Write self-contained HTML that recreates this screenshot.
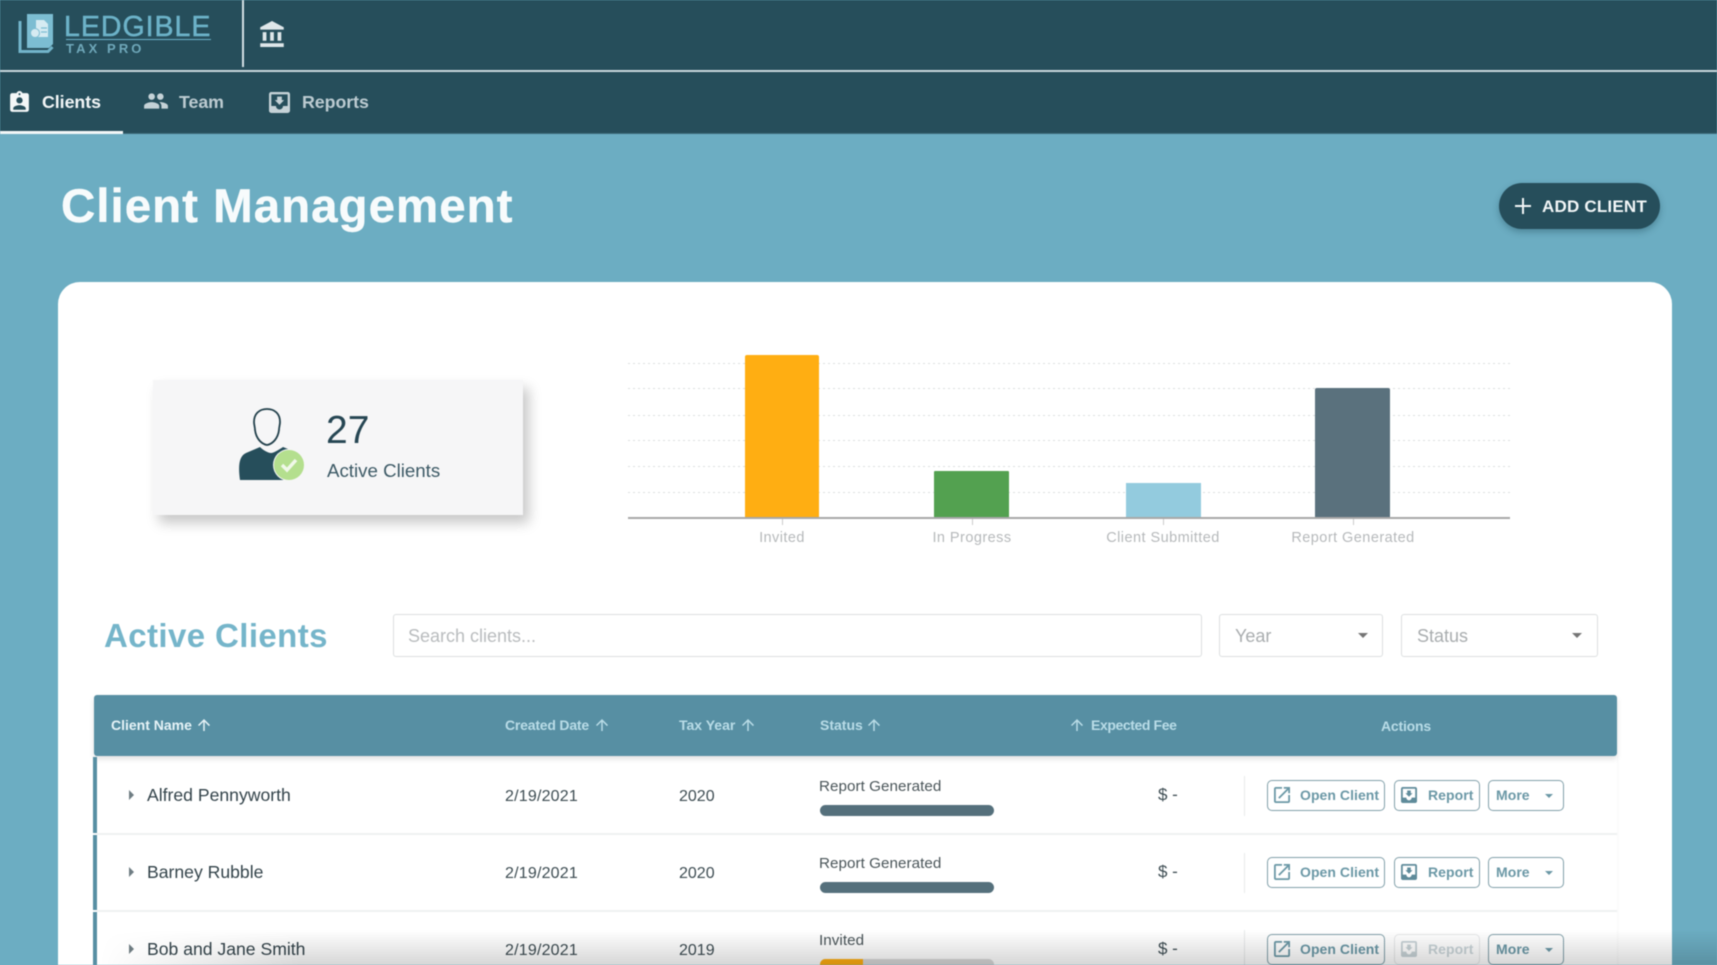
<!DOCTYPE html>
<html lang="en">
<head>
<meta charset="utf-8">
<title>Client Management</title>
<style>
html,body{margin:0;padding:0;width:1717px;height:965px;overflow:hidden;background:#6cadc2}
body{font-family:"Liberation Sans",sans-serif;position:relative}
#p{position:absolute;left:0;top:0;width:1717px;height:965px;overflow:hidden;background:#6cadc2;filter:blur(.5px)}
.a{position:absolute;white-space:nowrap}
.t{position:absolute;white-space:nowrap;line-height:1}
.th{font-size:14px;font-weight:bold;color:#b9dce7;top:718px}
.name{font-size:17.6px;color:#33434a;left:147px}
.cell{font-size:16px;color:#3d4c52;letter-spacing:.2px}
.st{font-size:15.2px;color:#4a5559;left:819px;letter-spacing:.05px}
.bt{position:absolute;box-sizing:border-box;height:31px;border:1.5px solid #82a0aa;border-radius:5px;background:#fff}
.bl{position:absolute;font-size:14px;font-weight:bold;color:#6b98a6;line-height:1;white-space:nowrap;letter-spacing:.05px}
.ic{position:absolute}
.grid{position:absolute;left:628px;width:882px;height:1px;background:repeating-linear-gradient(to right,#dcdedf 0,#dcdedf 2px,transparent 2px,transparent 5px)}
.inp{position:absolute;box-sizing:border-box;top:614px;height:43px;border:1.5px solid #dcdfe0;border-radius:3px;background:#fff}
.ph{font-size:18px;color:#a9adaf;top:627px}
.car{position:absolute;width:0;height:0;border-left:5.5px solid transparent;border-right:5.5px solid transparent;border-top:5.5px solid #757575}
.hr{position:absolute;left:97px;width:1520px;height:2px;background:#eff1f1}
.nv{position:absolute;white-space:nowrap;line-height:1;top:94px;font-size:17.8px;font-weight:bold;color:#bccbd1;letter-spacing:-.05px}
.cl{position:absolute;white-space:nowrap;line-height:1;width:200px;text-align:center;top:531px;font-size:14.5px;color:#b6b9bb;letter-spacing:.45px}
</style>
</head>
<body>
<svg width="0" height="0" style="position:absolute">
<symbol id="i-in" viewBox="3 3 18 18"><path d="M19 3H4.99c-1.11 0-1.98.89-1.98 2L3 19c0 1.1.88 2 1.99 2H19c1.1 0 2-.9 2-2V5c0-1.11-.9-2-2-2zm0 12h-4c0 1.66-1.35 3-3 3s-3-1.34-3-3H4.99V5H19v10zm-3-5h-2V7h-4v3H8l4 4 4-4z"/></symbol>
<symbol id="i-op" viewBox="3 3 18 18"><path d="M19 19H5V5h7V3H5c-1.11 0-2 .9-2 2v14c0 1.1.89 2 2 2h14c1.1 0 2-.9 2-2v-7h-2v7zM14 3v2h3.59l-9.83 9.83 1.41 1.41L19 6.41V10h2V3h-7z"/></symbol>
<symbol id="i-up" viewBox="4 4 16 16"><path d="M4 12l1.41 1.41L11 7.83V20h2V7.83l5.58 5.59L20 12l-8-8-8 8z"/></symbol>
</svg>
<div id="p">

<!-- header -->
<div class="a" style="left:0;top:0;width:1717px;height:134px;background:#264e5b"></div>
<div class="a" style="left:0;top:69.5px;width:1717px;height:2px;background:#c9d8dd"></div>
<div class="a" style="left:242px;top:0;width:2px;height:67px;background:#d5e0e4"></div>
<div class="a" style="left:0;top:131px;width:123px;height:3px;background:#f2f6f7"></div>
<div class="a" style="left:123px;top:133px;width:1594px;height:1px;background:#3d6a79"></div>

<!-- logo -->
<svg class="ic" style="left:17px;top:13px" width="38" height="42" viewBox="0 0 38 42">
<path d="M3 8v30.500h28l4.500-4.500" fill="none" stroke="#72b4ca" stroke-width="3"/>
<path d="M10 1h26v30l-4 4H10z" fill="#7cbdd2"/>
<path d="M19 7h8l4 4v13H19z" fill="#d6ebf2"/>
<circle cx="18" cy="20" r="4.500" fill="#d6ebf2" stroke="#7cbdd2"/>
<path d="M24 15h6M24 19h6" stroke="#7cbdd2" stroke-width="1.2"/>
</svg>
<div class="t" style="left:64px;top:13px;font-size:28.5px;color:#6cb2c8;letter-spacing:1px;-webkit-text-stroke:.5px #6cb2c8">LEDGIBLE</div>
<div class="a" style="left:66px;top:39px;width:145px;height:1px;background:#6cb2c8"></div>
<div class="t" style="left:66px;top:42px;font-size:13px;font-weight:bold;color:#6fa8ba;letter-spacing:3.1px">TAX PRO</div>
<svg class="ic" style="left:259px;top:21px" width="26" height="26" viewBox="1 1 21 21"><path fill="#dfe7ea" d="M4 10v7h3v-7H4zm6 0v7h3v-7h-3zM2 22h19v-3H2v3zm14-12v7h3v-7h-3zm-4.500-9L2 6v2h19V6l-9.500-5z"/></svg>

<!-- nav -->
<svg class="ic" style="left:7px;top:90px" width="25" height="25" viewBox="0 0 24 24"><path fill="#f4f7f8" d="M19 3h-4.180C14.400 1.840 13.300 1 12 1c-1.300 0-2.400.840-2.820 2H5c-1.100 0-2 .900-2 2v14c0 1.100.900 2 2 2h14c1.100 0 2-.900 2-2V5c0-1.100-.900-2-2-2zm-7 0c.550 0 1 .450 1 1s-.450 1-1 1-1-.450-1-1 .450-1 1-1zm0 4c1.660 0 3 1.340 3 3s-1.340 3-3 3-3-1.340-3-3 1.340-3 3-3zm6 12H6v-1.400c0-2 4-3.100 6-3.100s6 1.100 6 3.100V19z"/></svg>
<div class="nv" style="left:42px;color:#f2f6f7">Clients</div>
<svg class="ic" style="left:143px;top:88px" width="26" height="26" viewBox="0 0 24 24"><path fill="#c5d2d7" d="M16 11c1.660 0 2.990-1.340 2.990-3S17.660 5 16 5c-1.660 0-3 1.340-3 3s1.340 3 3 3zm-8 0c1.660 0 2.990-1.340 2.990-3S9.660 5 8 5C6.340 5 5 6.340 5 8s1.340 3 3 3zm0 2c-2.330 0-7 1.170-7 3.500V19h14v-2.500c0-2.330-4.670-3.500-7-3.500zm8 0c-.290 0-.620.020-.970.050 1.160.840 1.970 1.970 1.970 3.450V19h6v-2.500c0-2.330-4.670-3.500-7-3.500z"/></svg>
<div class="nv" style="left:179px">Team</div>
<svg class="ic" style="left:269px;top:92px;fill:#c5d2d7" width="21" height="21"><use href="#i-in"/></svg>
<div class="nv" style="left:302px">Reports</div>

<!-- title -->
<div class="t" style="left:61px;top:183px;font-size:47.500px;font-weight:bold;color:#f7fbfc;letter-spacing:1px;-webkit-text-stroke:.4px #f7fbfc">Client Management</div>
<div class="a" style="left:1499px;top:183px;width:161px;height:46px;border-radius:23px;background:#264e5b;box-shadow:0 3px 7px rgba(20,60,75,.35)"></div>
<svg class="ic" style="left:1514px;top:197px" width="18" height="18"><path d="M9 1v16M1 9h16" stroke="#f2f6f7" stroke-width="2"/></svg>
<div class="t" style="left:1542px;top:198px;font-size:17px;font-weight:bold;color:#f2f6f7;letter-spacing:.2px">ADD CLIENT</div>

<!-- main card -->
<div class="a" style="left:58px;top:282px;width:1614px;height:720px;border-radius:22px;background:#fff"></div>

<!-- stat card -->
<div class="a" style="left:153px;top:380px;width:370px;height:135px;background:#f6f6f7;box-shadow:6px 8px 12px rgba(0,0,0,.22)"></div>
<svg class="ic" style="left:236px;top:404px" width="70" height="80" viewBox="0 0 70 80">
<path d="M4 76c-2-14-1-24 6-27l14-6c3 3 8 6 11 6s9-4 12-6l10 4v29z" fill="#264e5b"/>
<path d="M31 5c-8 0-13 5-13 13 0 3 1 5 1 8 1 8 6 14 12 15 6-1 11-7 12-15 0-3 1-5 1-8 0-8-5-13-13-13z" fill="#f6f6f7" stroke="#23414c" stroke-width="1.800"/>
<circle cx="53" cy="61" r="16" fill="#f6f6f7"/>
<circle cx="53" cy="61" r="15" fill="#b4df8e"/>
<path d="M46 61l5 5 9-10" fill="none" stroke="#f0f8e9" stroke-width="3.500"/>
</svg>
<div class="t" style="left:326px;top:411px;font-size:39px;color:#264653">27</div>
<div class="t" style="left:327px;top:462px;font-size:18.700px;color:#3d5a66">Active Clients</div>

<!-- chart -->
<div class="grid" style="top:363px"></div>
<div class="grid" style="top:388px"></div>
<div class="grid" style="top:415px"></div>
<div class="grid" style="top:440px"></div>
<div class="grid" style="top:466px"></div>
<div class="grid" style="top:492px"></div>
<div class="a" style="left:745px;top:355px;width:74px;height:163px;background:#ffae12;border-radius:2px 2px 0 0"></div>
<div class="a" style="left:934px;top:471px;width:75px;height:47px;background:#53a150;border-radius:1px 1px 0 0"></div>
<div class="a" style="left:1126px;top:483px;width:75px;height:35px;background:#93cbde"></div>
<div class="a" style="left:1315px;top:388px;width:75px;height:130px;background:#5a717d;border-radius:2px 2px 0 0"></div>
<div class="a" style="left:628px;top:517px;width:882px;height:2px;background:#a8a8a8"></div>
<div class="a" style="left:782px;top:519px;width:1px;height:6px;background:#ccc"></div>
<div class="a" style="left:972px;top:519px;width:1px;height:6px;background:#ccc"></div>
<div class="a" style="left:1163px;top:519px;width:1px;height:6px;background:#ccc"></div>
<div class="a" style="left:1353px;top:519px;width:1px;height:6px;background:#ccc"></div>
<div class="cl" style="left:682px">Invited</div>
<div class="cl" style="left:872px">In Progress</div>
<div class="cl" style="left:1063px">Client Submitted</div>
<div class="cl" style="left:1253px">Report Generated</div>

<!-- filters -->
<div class="t" style="left:104px;top:619px;font-size:33px;font-weight:bold;color:#75b5ca;letter-spacing:.4px">Active Clients</div>
<div class="inp" style="left:393px;width:809px"></div>
<div class="t ph" style="left:408px;color:#b9bcbe">Search clients...</div>
<div class="inp" style="left:1219px;width:164px"></div>
<div class="t ph" style="left:1235px">Year</div>
<div class="car" style="left:1358px;top:633px"></div>
<div class="inp" style="left:1401px;width:197px"></div>
<div class="t ph" style="left:1417px">Status</div>
<div class="car" style="left:1572px;top:633px"></div>

<!-- table -->
<div class="a" style="left:97px;top:756px;width:1520px;height:220px;background:#fff;box-shadow:0 0 3px rgba(0,0,0,.06)"></div>
<div class="a" style="left:94px;top:695px;width:1523px;height:61px;background:#578fa3;border-radius:3px;box-shadow:0 3px 6px rgba(0,0,0,.12)"></div>
<div class="t th" style="left:111px;color:#e6f3f7">Client Name</div>
<svg class="ic" style="left:198px;top:719px;fill:#e6f3f7" width="12" height="12"><use href="#i-up"/></svg>
<div class="t th" style="left:505px;letter-spacing:-.2px">Created Date</div>
<svg class="ic" style="left:596px;top:719px;fill:#b9dce7" width="12" height="12"><use href="#i-up"/></svg>
<div class="t th" style="left:679px">Tax Year</div>
<svg class="ic" style="left:742px;top:719px;fill:#b9dce7" width="12" height="12"><use href="#i-up"/></svg>
<div class="t th" style="left:820px">Status</div>
<svg class="ic" style="left:868px;top:719px;fill:#b9dce7" width="12" height="12"><use href="#i-up"/></svg>
<svg class="ic" style="left:1071px;top:719px;fill:#b9dce7" width="12" height="12"><use href="#i-up"/></svg>
<div class="t th" style="left:1091px;letter-spacing:-.4px">Expected Fee</div>
<div class="t th" style="left:1381px;top:719px;letter-spacing:-.2px">Actions</div>

<div class="a" style="left:93px;top:757px;width:4px;height:76px;background:#578fa3"></div>
<div class="a" style="left:93px;top:835px;width:4px;height:75px;background:#578fa3"></div>
<div class="a" style="left:93px;top:912px;width:4px;height:60px;background:#578fa3"></div>
<div class="hr" style="top:833px"></div>
<div class="hr" style="top:910px"></div>

<!-- row 1 -->
<div class="a" style="left:129px;top:790px;width:0;height:0;border-top:5.500px solid transparent;border-bottom:5.500px solid transparent;border-left:5.500px solid #6f7d83"></div>
<div class="t name" style="top:786.500px">Alfred Pennyworth</div>
<div class="t cell" style="left:505px;top:788.500px">2/19/2021</div>
<div class="t cell" style="left:679px;top:788.500px;letter-spacing:0">2020</div>
<div class="t st" style="top:779px">Report Generated</div>
<div class="a" style="left:820px;top:805px;width:174px;height:11px;border-radius:6px;background:#55707c"></div>
<div class="t" style="left:1158px;top:786px;font-size:17px;color:#3d4c52">$ -</div>
<div class="a" style="left:1243.500px;top:776px;width:1px;height:40px;background:#e8eaeb"></div>
<div class="bt" style="left:1267px;top:780px;width:118px"></div>
<svg class="ic" style="left:1274px;top:787px;fill:#6b98a6" width="16" height="16"><use href="#i-op"/></svg>
<div class="bl" style="left:1300px;top:788px">Open Client</div>
<div class="bt" style="left:1394px;top:780px;width:86px"></div>
<svg class="ic" style="left:1401px;top:787px;fill:#5f8b9a" width="16" height="16"><use href="#i-in"/></svg>
<div class="bl" style="left:1428px;top:788px">Report</div>
<div class="bt" style="left:1488px;top:780px;width:76px"></div>
<div class="bl" style="left:1496px;top:788px">More</div>
<div class="car" style="left:1545px;top:794px;border-left-width:4px;border-right-width:4px;border-top:4px solid #6b98a6"></div>

<!-- row 2 -->
<div class="a" style="left:129px;top:867px;width:0;height:0;border-top:5.500px solid transparent;border-bottom:5.500px solid transparent;border-left:5.500px solid #6f7d83"></div>
<div class="t name" style="top:863.500px">Barney Rubble</div>
<div class="t cell" style="left:505px;top:865.500px">2/19/2021</div>
<div class="t cell" style="left:679px;top:865.500px;letter-spacing:0">2020</div>
<div class="t st" style="top:856px">Report Generated</div>
<div class="a" style="left:820px;top:882px;width:174px;height:11px;border-radius:6px;background:#55707c"></div>
<div class="t" style="left:1158px;top:863px;font-size:17px;color:#3d4c52">$ -</div>
<div class="a" style="left:1243.500px;top:853px;width:1px;height:40px;background:#e8eaeb"></div>
<div class="bt" style="left:1267px;top:857px;width:118px"></div>
<svg class="ic" style="left:1274px;top:864px;fill:#6b98a6" width="16" height="16"><use href="#i-op"/></svg>
<div class="bl" style="left:1300px;top:865px">Open Client</div>
<div class="bt" style="left:1394px;top:857px;width:86px"></div>
<svg class="ic" style="left:1401px;top:864px;fill:#5f8b9a" width="16" height="16"><use href="#i-in"/></svg>
<div class="bl" style="left:1428px;top:865px">Report</div>
<div class="bt" style="left:1488px;top:857px;width:76px"></div>
<div class="bl" style="left:1496px;top:865px">More</div>
<div class="car" style="left:1545px;top:871px;border-left-width:4px;border-right-width:4px;border-top:4px solid #6b98a6"></div>

<!-- row 3 -->
<div class="a" style="left:129px;top:944px;width:0;height:0;border-top:5.500px solid transparent;border-bottom:5.500px solid transparent;border-left:5.500px solid #6f7d83"></div>
<div class="t name" style="top:940.500px">Bob and Jane Smith</div>
<div class="t cell" style="left:505px;top:942.500px">2/19/2021</div>
<div class="t cell" style="left:679px;top:942.500px;letter-spacing:0">2019</div>
<div class="t st" style="top:933px">Invited</div>
<div class="a" style="left:820px;top:959px;width:174px;height:11px;border-radius:6px;background:#d9d9d9"></div>
<div class="a" style="left:820px;top:959px;width:43px;height:11px;border-radius:6px 0 0 6px;background:#ffae12"></div>
<div class="t" style="left:1158px;top:940px;font-size:17px;color:#3d4c52">$ -</div>
<div class="a" style="left:1243.500px;top:930px;width:1px;height:40px;background:#e8eaeb"></div>
<div class="bt" style="left:1267px;top:934px;width:118px"></div>
<svg class="ic" style="left:1274px;top:941px;fill:#6b98a6" width="16" height="16"><use href="#i-op"/></svg>
<div class="bl" style="left:1300px;top:942px">Open Client</div>
<div class="bt" style="left:1394px;top:934px;width:86px;border-color:#e6e8e9"></div>
<svg class="ic" style="left:1401px;top:941px;fill:#c7d2d6" width="16" height="16"><use href="#i-in"/></svg>
<div class="bl" style="left:1428px;top:942px;color:#c9d4d8">Report</div>
<div class="bt" style="left:1488px;top:934px;width:76px"></div>
<div class="bl" style="left:1496px;top:942px">More</div>
<div class="car" style="left:1545px;top:948px;border-left-width:4px;border-right-width:4px;border-top:4px solid #6b98a6"></div>

<!-- bottom fade -->
<div class="a" style="left:100px;top:930px;width:1617px;height:35px;background:linear-gradient(to bottom,rgba(0,0,0,0),rgba(0,0,0,.16));-webkit-mask-image:linear-gradient(to right,transparent,#000 200px)"></div>

</div>
</body>
</html>
